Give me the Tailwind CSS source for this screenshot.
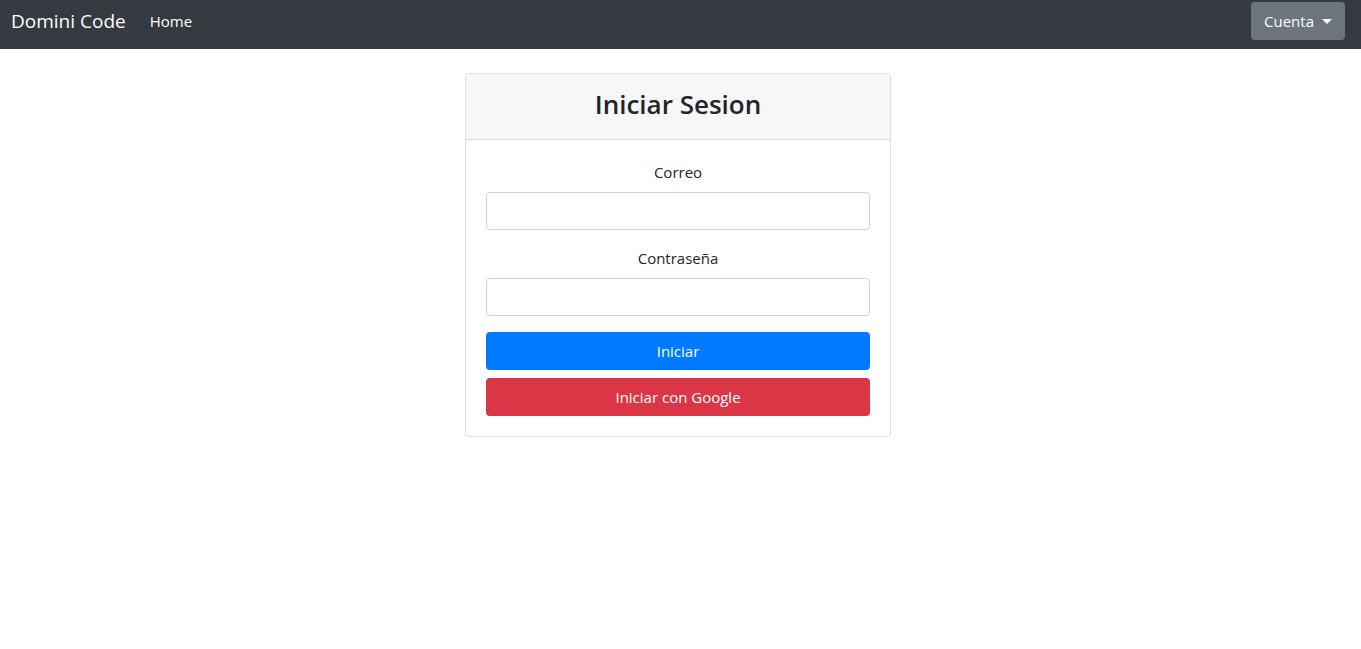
<!DOCTYPE html>
<html lang="es">
<head>
<meta charset="utf-8">
<meta name="viewport" content="width=device-width, initial-scale=1">
<title>Domini Code</title>
<script src="https://cdn.jsdelivr.net/npm/@tailwindcss/browser@4"></script>
</head>
<body class="bg-white font-['Segoe_UI','Open_Sans',sans-serif] text-base text-[#212529]">
<nav class="flex h-[49px] items-start justify-between bg-[#343a40] pl-[11px] pr-4 pt-0.5 text-white">
  <div class="flex h-[38px] items-center gap-6">
    <a href="#" class="text-[19px]">Domini Code</a>
    <a href="#" class="text-[15px]">Home</a>
  </div>
  <button type="button" class="flex h-[38px] items-center gap-2 rounded-sm bg-[#6c757d] px-[13px] text-[15px]">Cuenta
    <svg class="h-[5px] w-[10px]" viewBox="0 0 10 5" fill="currentColor" aria-hidden="true"><path d="M0 0h10L5 5z"/></svg>
  </button>
</nav>
<main class="pl-4 pr-[21px] pt-6">
  <section class="mx-auto w-full max-w-[426px] rounded-sm border border-[#dfdfdf] text-center">
    <header class="rounded-t-sm border-b border-[#d8d8d8] bg-[#f7f7f7] px-5 pb-[17px] pt-3">
      <h1 class="text-[26px] leading-9 font-semibold">Iniciar Sesion</h1>
    </header>
    <form class="flex flex-col p-5 text-[15px] leading-6">
      <label for="correo" class="mb-2">Correo</label>
      <input id="correo" type="email" class="mb-4 h-[38px] w-full rounded-sm border border-[#ced4da] px-3">
      <label for="clave" class="mb-2">Contraseña</label>
      <input id="clave" type="password" class="mb-4 h-[38px] w-full rounded-sm border border-[#ced4da] px-3">
      <button type="submit" class="mb-2 h-[38px] rounded-sm bg-[#007bff] text-white">Iniciar</button>
      <button type="button" class="h-[38px] rounded-sm bg-[#dc3545] text-white">Iniciar con Google</button>
    </form>
  </section>
</main>
</body>
</html>
